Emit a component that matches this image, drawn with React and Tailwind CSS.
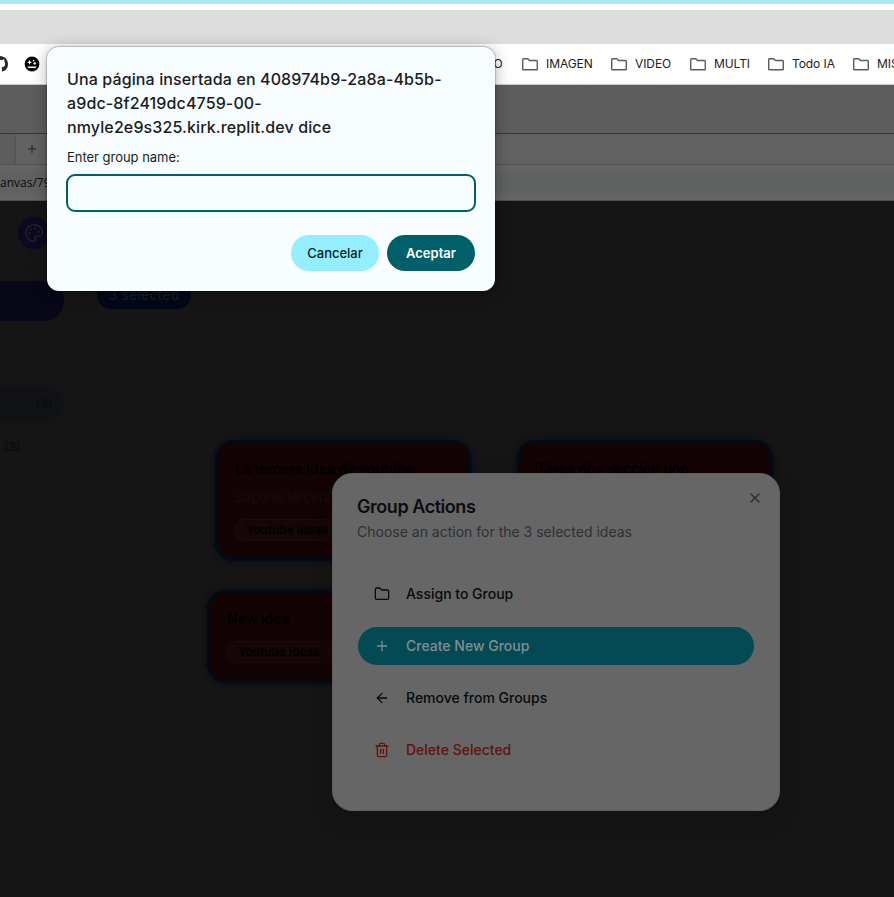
import { ArrowLeft, Folder, Palette, Plus, Trash2, X } from "lucide-react";

function BookmarkFolder({ label, className }) {
  return (
    <div className={`flex shrink-0 items-center gap-2 ${className}`}>
      <svg width="16" height="13" viewBox="0 0 16 13" fill="none" stroke="#5b5b5b" strokeWidth="1.4" strokeLinejoin="round">
        <path d="M.7 1.5Q.7.7 1.5.7h4.3l1.7 1.8h7q.8 0 .8.8v7.7q0 .8-.8.8h-13q-.8 0-.8-.8z" />
      </svg>
      <span className="whitespace-nowrap pb-px tracking-[-0.08px]">{label}</span>
    </div>
  );
}

function BrowserBars() {
  return (
    <header>
      <div className="h-1 bg-[#ade6f0]" />
      <div className="h-1.5 bg-white" />
      <div className="h-[34px] bg-[#dddddd]" />
      <div className="relative flex h-[41px] items-center overflow-hidden border-b border-[#c9cccc] bg-white text-[12px] text-[#202124]">
        <svg className="-ml-2 shrink-0" width="16" height="16" viewBox="0 0 16 16" fill="#24292f">
          <path d="M8 0C3.58 0 0 3.58 0 8c0 3.54 2.29 6.53 5.47 7.59.4.07.55-.17.55-.38 0-.19-.01-.82-.01-1.49-2.01.37-2.53-.49-2.69-.94-.09-.23-.48-.94-.82-1.13-.28-.15-.68-.52-.01-.53.63-.01 1.08.58 1.23.82.72 1.21 1.87.87 2.33.66.07-.52.28-.87.51-1.07-1.78-.2-3.64-.89-3.64-3.95 0-.87.31-1.59.82-2.15-.08-.2-.36-1.02.08-2.12 0 0 .67-.21 2.2.82a7.4 7.4 0 0 1 4 0c1.53-1.04 2.2-.82 2.2-.82.44 1.1.16 1.92.08 2.12.51.56.82 1.27.82 2.15 0 3.07-1.87 3.75-3.65 3.95.29.25.54.73.54 1.48 0 1.07-.01 1.93-.01 2.2 0 .21.15.46.55.38A8 8 0 0 0 16 8c0-4.42-3.58-8-8-8z" />
        </svg>
        <svg className="ml-4 shrink-0" width="16" height="16" viewBox="0 0 16 16">
          <circle cx="8" cy="8" r="7.4" fill="#050505" />
          <path d="M5.6 3.7l.7 1.8 1.8.7-1.8.7-.7 1.8-.7-1.8-1.8-.7 1.8-.7z" fill="#fff" />
          <circle cx="9.6" cy="4.7" r=".9" fill="#fff" />
          <circle cx="10.7" cy="7.4" r="1.2" fill="#fff" />
          <path d="M3.6 10.4h8.8v.6q-.5 1.1-1.4 1.1H5q-.9 0-1.4-1.1z" fill="#fff" />
        </svg>
        <span className="ml-[453.5px] w-[9.5px] shrink-0 pb-px">O</span>
        <BookmarkFolder label="IMAGEN" className="ml-[19px] w-[89px]" />
        <BookmarkFolder label="VIDEO" className="w-[79px]" />
        <BookmarkFolder label="MULTI" className="w-[78px]" />
        <BookmarkFolder label="Todo IA" className="w-[85px]" />
        <BookmarkFolder label="MIS" className="" />
      </div>
      <div className="h-12 bg-[#5d5d5d]" />
      <div className="flex h-8 border-y border-t-[#35305f] border-b-[#515151] bg-[#626262]">
        <div className="w-4 border-r border-[#535353] bg-[#5d5d5d]" />
        <div className="flex w-8 items-center justify-center text-[#222]">
          <Plus size={12} strokeWidth={2} />
        </div>
      </div>
      <div className="h-9 border-b border-[#505050] bg-[#656565] pt-1.5">
        <div className="h-6 bg-[#5f6260] font-['Open_Sans',sans-serif] text-[12px] leading-6 text-[#0c0d0d]">
          <span>anvas/79</span>
        </div>
      </div>
    </header>
  );
}

function Sidebar() {
  return (
    <aside className="w-[81px] shrink-0 border-r border-[#131313] text-[12px] text-[#07090c]">
      <div className="flex h-[64px] items-center border-b border-[#131313] pl-[18px]">
        <div className="flex size-8 items-center justify-center rounded-full bg-[#0a0920] text-[#22212b]">
          <Palette size={20} strokeWidth={1.8} />
        </div>
      </div>
      <div className="mt-4 h-10 w-16 rounded-r-[20px] bg-[#080718]" />
      <div className="mt-[65px] flex h-9 w-16 items-center justify-end rounded-r-[18px] bg-[#101215] pr-3">
        <span>(3)</span>
      </div>
      <div className="mt-[7px] flex h-9 items-center pl-1">(3)</div>
    </aside>
  );
}

function IdeaCard({ title, note, tag, className }) {
  return (
    <article className={`absolute w-[250px] rounded-[16px] bg-[#140305] pl-[17px] pr-4 pt-4 text-[#020101] shadow-[0_0_0_3px_#030a14,0_0_4px_4px_#070d17] ${className}`}>
      <h3 className="text-[14px] font-semibold leading-5 tracking-[-0.02px]">{title}</h3>
      {note && <p className="mt-2 whitespace-nowrap text-[13px] leading-5 text-[#180c0e]">{note}</p>}
      {tag && (
        <span className="-ml-px mt-3 inline-flex h-[22px] items-center rounded-full border border-[#1a0b0c] bg-[#150708] px-[11px] text-[12px] font-semibold tracking-[-0.05px]">
          {tag}
        </span>
      )}
    </article>
  );
}

function Canvas() {
  return (
    <main className="relative flex-1">
      <div className="absolute left-[16px] top-[80px] flex h-7 w-[94px] items-center justify-center rounded-full bg-[#030818] pb-px text-[14px] tracking-[0.2px] text-[#191e2b]">
        3 selected
      </div>
      <IdeaCard title="La tercera idea de youtube" note="Soporte tercera idea" tag="Youtube ideas" className="left-[137px] top-[242px] h-[115px]" />
      <IdeaCard title="Tarea dos seccion uno" className="left-[439px] top-[242px] h-[115px]" />
      <IdeaCard title="New idea" tag="Youtube ideas" className="left-[129px] top-[392px] h-[87px]" />
    </main>
  );
}

function ActionButton({ icon: Icon, label, className }) {
  return (
    <button className={`flex h-10 w-full items-center gap-4 rounded-[20px] border bg-clip-padding px-4 text-[14px] font-medium leading-5 ${className}`}>
      <Icon size={16} strokeWidth={1.9} />
      <span>{label}</span>
    </button>
  );
}

function GroupActions() {
  return (
    <section className="absolute left-[332px] top-[473px] h-[338px] w-[448px] rounded-[20px] border border-[#5f5f5f] bg-[#666666] px-6 pt-6 shadow-[0_8px_20px_#0a0a0a40]">
      <X className="absolute right-4 top-4 text-[#2b2d30]" size={16} strokeWidth={2} />
      <h2 className="text-[18px] font-semibold leading-[18px] tracking-[-0.45px] text-[#0b0d10]">Group Actions</h2>
      <p className="mt-1.5 text-[14px] leading-5 text-[#2d3036]">Choose an action for the 3 selected ideas</p>
      <div className="mt-8 flex flex-col gap-3">
        <ActionButton icon={Folder} label="Assign to Group" className="border-[#636364] text-[#080a0d]" />
        <ActionButton icon={Plus} label="Create New Group" className="border-transparent bg-[#044a55] text-[#808e91]" />
        <ActionButton icon={ArrowLeft} label="Remove from Groups" className="border-[#636364] text-[#080a0d]" />
        <ActionButton icon={Trash2} label="Delete Selected" className="border-[#636364] text-[#621111]" />
      </div>
    </section>
  );
}

function PromptDialog() {
  return (
    <section className="absolute left-[47px] top-[47px] h-[244px] w-[448px] rounded-[12px] bg-[#f8fdff] px-5 pt-5 text-[#191c1d] shadow-[0_0_1px_1px_#00000030,0_2px_16px_#00000050]">
      <h1 className="whitespace-nowrap text-[16px] font-medium leading-6 tracking-[0.12px]">
        Una página insertada en 408974b9-2a8a-4b5b-
        <br />
        a9dc-8f2419dc4759-00-
        <br />
        nmyle2e9s325.kirk.replit.dev dice
      </h1>
      <label className="mt-2 block text-[13px] leading-5 tracking-[-0.03px]">Enter group name:</label>
      <input className="-ml-px mt-[7px] block h-[38px] w-[410px] rounded-[9px] border-2 border-[#006069] bg-transparent px-2 text-[13px] outline-none" />
      <div className="mt-[23px] flex justify-end gap-2 text-[13px]">
        <button className="h-9 w-[88px] rounded-full bg-[#95eeff] pt-0.5 font-medium text-[#001f24]">Cancelar</button>
        <button className="h-9 w-[88px] rounded-full bg-[#005f69] pt-0.5 font-semibold text-white">Aceptar</button>
      </div>
    </section>
  );
}

export default function App() {
  return (
    <div className="relative flex h-[897px] w-[894px] flex-col overflow-hidden bg-[#151515] font-['Inter','Liberation_Sans',sans-serif]">
      <BrowserBars />
      <div className="flex flex-1">
        <Sidebar />
        <Canvas />
      </div>
      <GroupActions />
      <PromptDialog />
    </div>
  );
}
